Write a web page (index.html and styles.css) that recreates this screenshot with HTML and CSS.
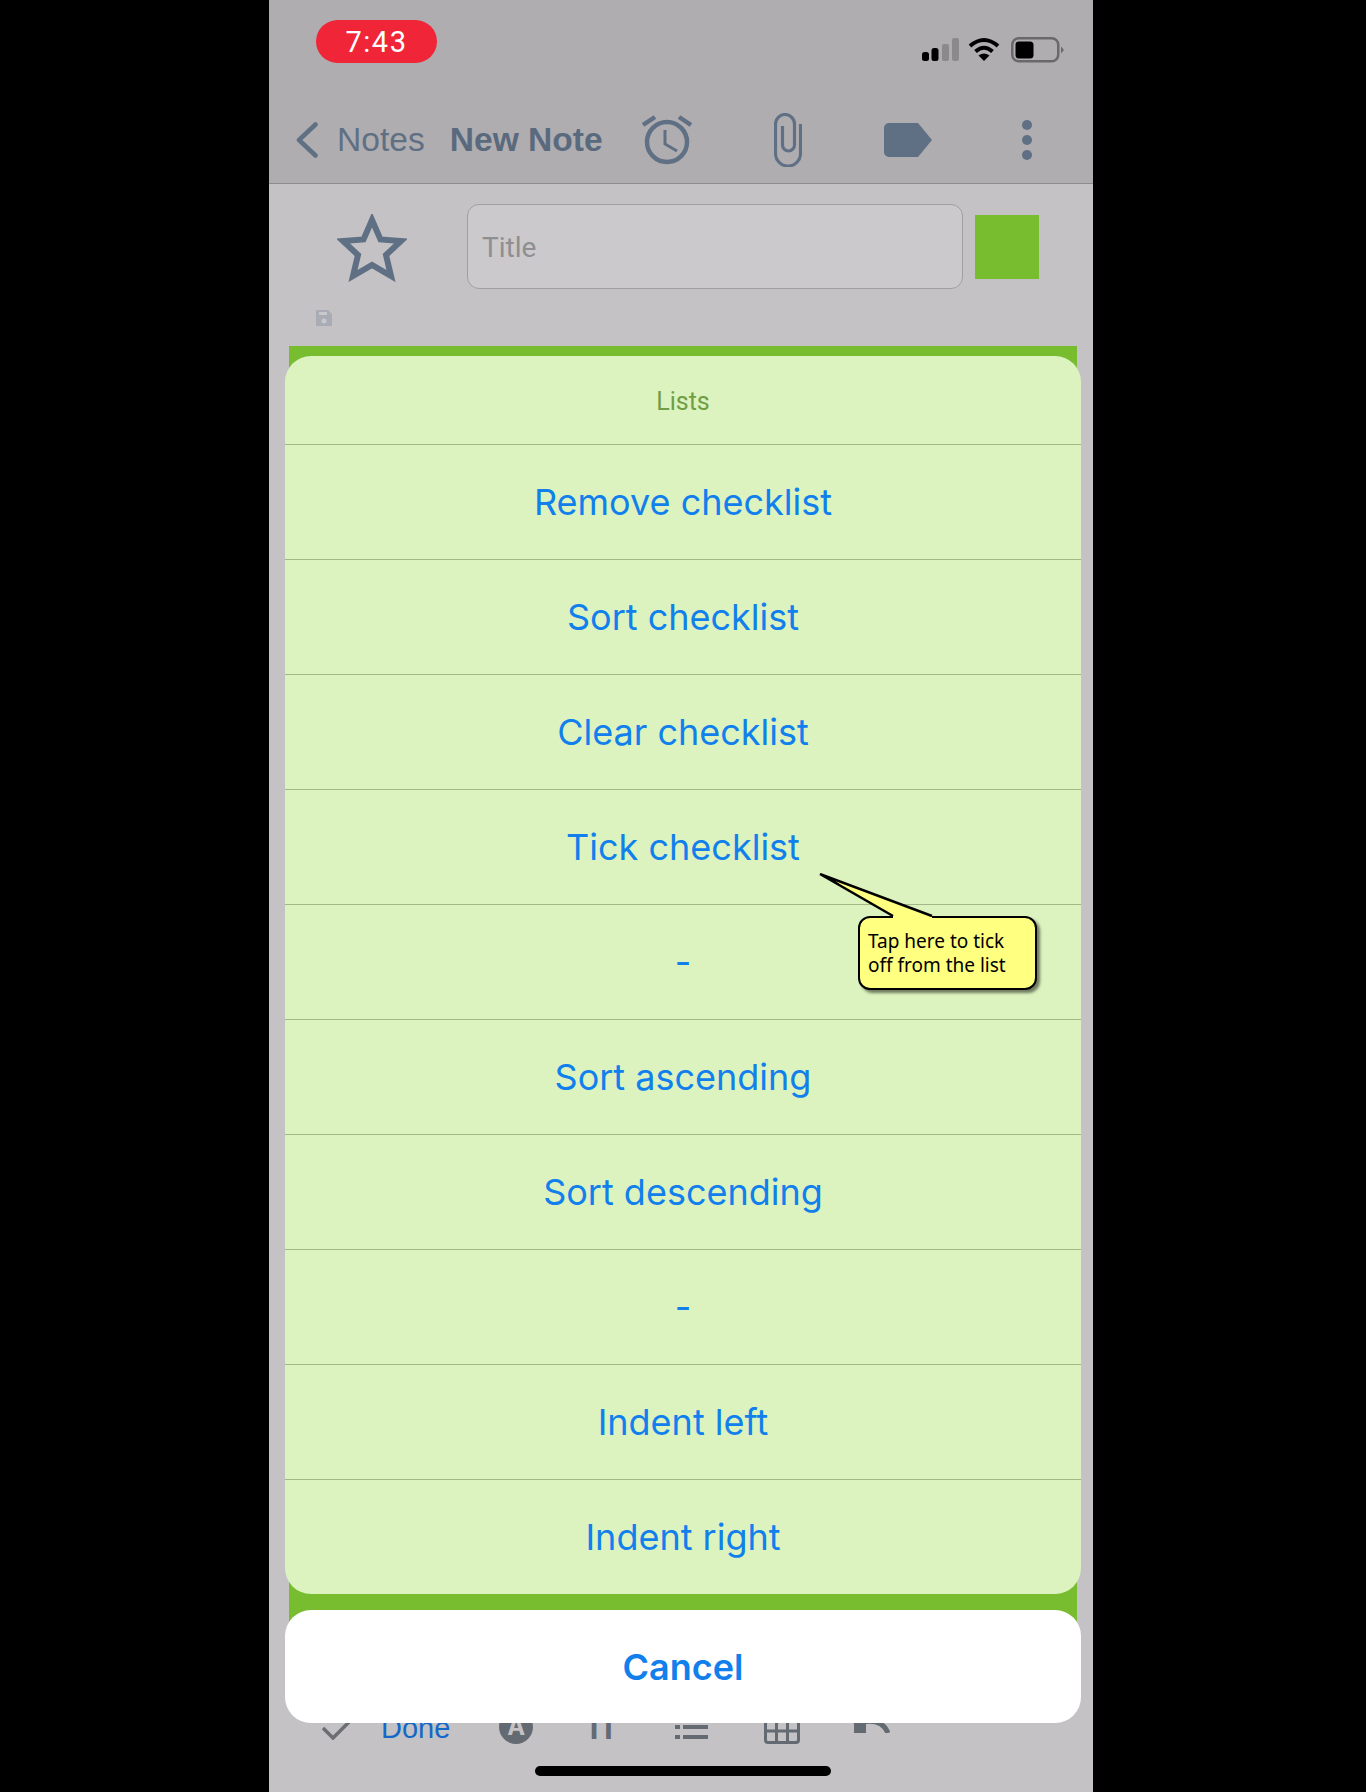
FILE: index.html
```html
<!DOCTYPE html>
<html lang="en">
<head>
    <meta charset="UTF-8">
    <title>New Note</title>
    <link rel="stylesheet" href="styles.css">
</head>
<body>
    <div class="phone">
        <div class="status-bar">
            <div class="clock-pill">7:43</div>
            <div class="status-icons">
                <svg class="signal" width="37" height="24" viewBox="0 0 37 24">
                    <rect x="0" y="14" width="7" height="9" rx="2.5" fill="#000"/>
                    <rect x="9.500" y="10" width="7" height="13" rx="2.500" fill="#000"/>
                    <rect x="20" y="6" width="7" height="17" rx="2" fill="#8b898c"/>
                    <rect x="30" y="0" width="7" height="23" rx="2" fill="#8b898c"/>
                </svg>
                <svg class="wifi" width="32" height="24" viewBox="0 0 32 24">
                    <path d="M2 9 Q16 -3 30 9" fill="none" stroke="#000" stroke-width="4"/>
                    <path d="M7.500 14.500 Q16 7 24.500 14.500" fill="none" stroke="#000" stroke-width="4"/>
                    <path d="M10.500 18.500 Q16 14.500 21.500 18.500 L16 24 Z" fill="#000"/>
                </svg>
                <svg class="battery" width="53" height="26" viewBox="0 0 53 26">
                    <rect x="1.250" y="1.250" width="46" height="23" rx="6.500" fill="none" stroke="#6a686b" stroke-width="2.500"/>
                    <rect x="4.500" y="4.500" width="18" height="17" rx="3.500" fill="#000"/>
                    <path d="M50 9.500 L53 13 L50 16.500 Z" fill="#6a686b"/>
                </svg>
            </div>
        </div>

        <div class="nav-bar">
            <svg class="nav-back" width="22" height="36" viewBox="0 0 22 36">
                <path d="M19.500 2.500 L3 18 L19.500 33.500" fill="none" stroke="#5f7084" stroke-width="4.500" stroke-linecap="round" stroke-linejoin="round"/>
            </svg>
            <span class="nav-notes">Notes</span>
            <span class="nav-title">New Note</span>
            <svg class="nav-alarm" width="50" height="50" viewBox="0 0 50 50">
                <circle cx="25" cy="27" r="20" fill="none" stroke="#5f7084" stroke-width="4.500"/>
                <path d="M23 15 V29 L35 36" fill="none" stroke="#5f7084" stroke-width="3"/>
                <path d="M1 10 L13 2 M49 10 L37 2" fill="none" stroke="#5f7084" stroke-width="4.500"/>
            </svg>
            <svg class="nav-clip" width="28" height="54" viewBox="0 0 28 54">
                <path d="M26.500 11 V40.500 a12.500 12.500 0 0 1 -25 0 V11 a9.500 9.500 0 0 1 19 0 V32 a6 6 0 0 1 -12 0 V13" fill="none" stroke="#5f7084" stroke-width="3.200"/>
            </svg>
            <svg class="nav-tag" width="48" height="34" viewBox="0 0 48 34">
                <path d="M5 0 H34 L48 17 L34 34 H5 a5 5 0 0 1 -5 -5 V5 a5 5 0 0 1 5 -5 Z" fill="#5f7084"/>
            </svg>
            <div class="nav-dots">
                <span></span>
                <span></span>
                <span></span>
            </div>
        </div>

        <div class="title-row">
            <svg class="star" width="70" height="68" viewBox="0 0 70 68">
                <path d="M35 6 L43.500 25.500 L64 27 L49 41 L54 62 L35 51 L16 62 L21 41 L6 27 L26.500 25.500 Z" fill="none" stroke="#5f7084" stroke-width="6"/>
            </svg>
            <div class="title-input">Title</div>
            <div class="color-swatch"></div>
        </div>

        <svg class="save-icon" width="16" height="16" viewBox="0 0 16 16">
            <path d="M1 0 H12 L16 4 V15 a1 1 0 0 1 -1 1 H1 a1 1 0 0 1 -1 -1 V1 a1 1 0 0 1 1 -1 Z" fill="#a9abb5"/>
            <rect x="3" y="2" width="8" height="3" fill="#c9c8cc"/>
            <circle cx="8" cy="11" r="2.500" fill="#c9c8cc"/>
        </svg>

        <div class="note-body"></div>

        <div class="toolbar">
            <svg class="tb-check" width="30" height="30" viewBox="0 0 30 30">
                <path d="M1 18 L11 28 L27 12" fill="none" stroke="#6c6e72" stroke-width="3.500"/>
            </svg>
            <span class="tb-done">Done</span>
            <div class="tb-font">A</div>
            <span class="tb-size">TI</span>
            <div class="tb-list">
                <div class="tb-list-line"></div>
                <div class="tb-list-line"></div>
            </div>
            <svg class="tb-table" width="36" height="40" viewBox="0 0 36 40">
                <path d="M1.500 2 H34.500 V36 a2.500 2.500 0 0 1 -2.500 2.500 H4 a2.500 2.500 0 0 1 -2.500 -2.500 Z M1.500 16 H34.500 M1.500 27 H34.500 M12.500 2 V38 M23.500 2 V38" fill="none" stroke="#646a72" stroke-width="3"/>
            </svg>
            <svg class="tb-undo" width="36" height="30" viewBox="0 0 36 30">
                <path d="M8 19 Q28 15 34 30" fill="none" stroke="#646a72" stroke-width="5"/>
                <rect x="0" y="14" width="12" height="16" fill="#646a72"/>
            </svg>
        </div>

        <div class="home-bar"></div>

        <!-- action sheet on top of the note -->
        <div class="sheet">
            <div class="sheet-group">
                <div class="sheet-head">Lists</div>
                <div class="sheet-row">Remove checklist</div>
                <div class="sheet-row">Sort checklist</div>
                <div class="sheet-row">Clear checklist</div>
                <div class="sheet-row">Tick checklist</div>
                <div class="sheet-row">-</div>
                <div class="sheet-row">Sort ascending</div>
                <div class="sheet-row">Sort descending</div>
                <div class="sheet-row">-</div>
                <div class="sheet-row">Indent left</div>
                <div class="sheet-row">Indent right</div>
            </div>
            <div class="sheet-cancel">Cancel</div>

            <div class="callout">
                <div class="callout-box">Tap here to tick<br>off from the list</div>
                <svg class="callout-tail" width="120" height="48" viewBox="0 0 120 48">
                    <path d="M1 1 L74 43 V46 H113 V43 Z" fill="#ffff80"/>
                    <path d="M1 1 L74 43 M1 1 L113 43" fill="none" stroke="#000" stroke-width="2.500"/>
                    <path d="M1 1 L14 6 L24 14 Z" fill="#000"/>
                </svg>
            </div>
        </div>
    </div>
</body>
</html>
```

FILE: styles.css
```css
* {
    box-sizing: border-box;
}
body {
    margin: 0;
    background-color: #000;
    font-family: Inter, "Liberation Sans", sans-serif;
}
.phone {
    position: relative;
    width: 824px;
    height: 1792px;
    margin-left: 269px;
    background-color: #c4c2c5;
    overflow: hidden;
}

/* status bar */
.status-bar {
    display: flex;
    justify-content: space-between;
    height: 76px;
    padding: 20px 29px 0 47px;
    background-color: #b0adb0;
}
.clock-pill {
    width: 121px;
    height: 43px;
    border-radius: 22px;
    background-color: #f02638;
    color: #fff;
    font-family: Roboto, sans-serif;
    font-size: 29px;
    letter-spacing: 1.500px;
    line-height: 45px;
    text-align: center;
}
.status-icons {
    display: flex;
    align-items: flex-start;
    padding-top: 17px;
}
.signal {
    margin-top: 1px;
}
.wifi {
    margin-left: 9px;
}
.battery {
    margin-left: 11px;
}

/* nav bar */
.nav-bar {
    display: flex;
    align-items: center;
    height: 108px;
    padding: 20px 0 0 27px;
    background-color: #b0adb0;
    border-bottom: 1px solid #8e8c8f;
}
.nav-notes {
    margin-left: 19px;
    color: #5f7084;
    font-family: "Liberation Sans", sans-serif;
    font-size: 33.600px;
}
.nav-title {
    margin-left: 25px;
    color: #5a6a7e;
    font-family: "Liberation Sans", sans-serif;
    font-size: 33.600px;
    font-weight: bold;
}
.nav-alarm {
    margin-left: 39px;
}
.nav-clip {
    margin-left: 82px;
}
.nav-tag {
    margin-left: 82px;
}
.nav-dots {
    display: flex;
    flex-direction: column;
    gap: 5px;
    margin-left: 90px;
}
.nav-dots span {
    width: 10px;
    height: 10px;
    border-radius: 50%;
    background-color: #5f7084;
}

/* title row */
.title-row {
    display: flex;
    align-items: center;
    height: 85px;
    margin-top: 20px;
    padding-left: 68px;
}
.star {
    margin-top: 3px;
}
.title-input {
    width: 496px;
    height: 85px;
    margin-left: 60px;
    padding-left: 14px;
    background-color: #cbc9cc;
    border: 1px solid #a09ea1;
    border-radius: 12px;
    color: #8f8e90;
    font-family: Roboto, sans-serif;
    font-size: 28px;
    line-height: 85px;
}
.color-swatch {
    width: 64px;
    height: 64px;
    margin-left: 12px;
    background-color: #78bd30;
}
.save-icon {
    display: block;
    margin: 21px 0 0 47px;
}

/* note */
.note-body {
    width: 788px;
    height: 1344px;
    margin: 20px 0 0 20px;
    background-color: #78bc30;
}

/* bottom toolbar, mostly hidden by the cancel button */
.toolbar {
    display: flex;
    align-items: flex-end;
    height: 44px;
    margin-top: 10px;
    padding-left: 53px;
}
.tb-check {
    margin-bottom: 4px;
}
.tb-done {
    margin: 0 0 0 29px;
    color: #1668c8;
    font-family: "Liberation Sans", sans-serif;
    font-size: 29px;
    line-height: 32px;
}
.tb-font {
    width: 34px;
    height: 34px;
    margin-left: 49px;
    border-radius: 50%;
    background-color: #646a72;
    color: #c4c2c5;
    font-size: 24px;
    font-weight: bold;
    line-height: 34px;
    text-align: center;
}
.tb-size {
    margin-left: 51px;
    color: #646a72;
    font-family: "Liberation Sans", sans-serif;
    font-size: 32px;
    font-weight: bold;
    line-height: 32px;
}
.tb-list {
    display: flex;
    flex-direction: column;
    gap: 6px;
    margin: 0 0 5px 62px;
}
.tb-list-line {
    width: 33px;
    height: 4px;
    background: linear-gradient(to right, #646a72 5px, transparent 5px, transparent 8px, #646a72 8px);
}
.tb-table {
    margin-left: 56px;
}
.tb-undo {
    margin: 0 0 11px 54px;
}
.home-bar {
    width: 296px;
    height: 10px;
    margin: 22px 0 0 266px;
    border-radius: 5px;
    background-color: #000;
}

/* action sheet */
.sheet {
    position: absolute;
    top: 356px;
    left: 16px;
    width: 796px;
}
.sheet-group {
    background-color: #dcf3bf;
    border-radius: 26px;
    overflow: hidden;
}
.sheet-head {
    height: 88px;
    color: #6f9e45;
    font-family: Roboto, sans-serif;
    font-size: 25px;
    line-height: 92px;
    text-align: center;
}
.sheet-row {
    height: 115px;
    border-top: 1px solid #a3b788;
    color: #1180ec;
    font-size: 36px;
    line-height: 114px;
    text-align: center;
}
.sheet-cancel {
    height: 113px;
    margin-top: 16px;
    background-color: #fff;
    border-radius: 26px;
    color: #1180ec;
    font-family: Inter, sans-serif;
    font-size: 36px;
    font-weight: 600;
    line-height: 114px;
    text-align: center;
}
.callout {
    position: absolute;
    top: 517px;
    left: 534px;
    width: 220px;
    height: 120px;
}
.callout-box {
    position: absolute;
    top: 43px;
    left: 39px;
    width: 179px;
    height: 74px;
    padding: 11px 0 0 8px;
    background-color: #ffff80;
    border: 2.500px solid #000;
    border-radius: 12px;
    box-shadow: 3px 3px 3px #6f7a5f;
    color: #000;
    font-family: "Noto Sans", sans-serif;
    font-size: 19px;
    line-height: 24px;
}
.callout-tail {
    position: absolute;
    top: 0;
    left: 0;
}
```
